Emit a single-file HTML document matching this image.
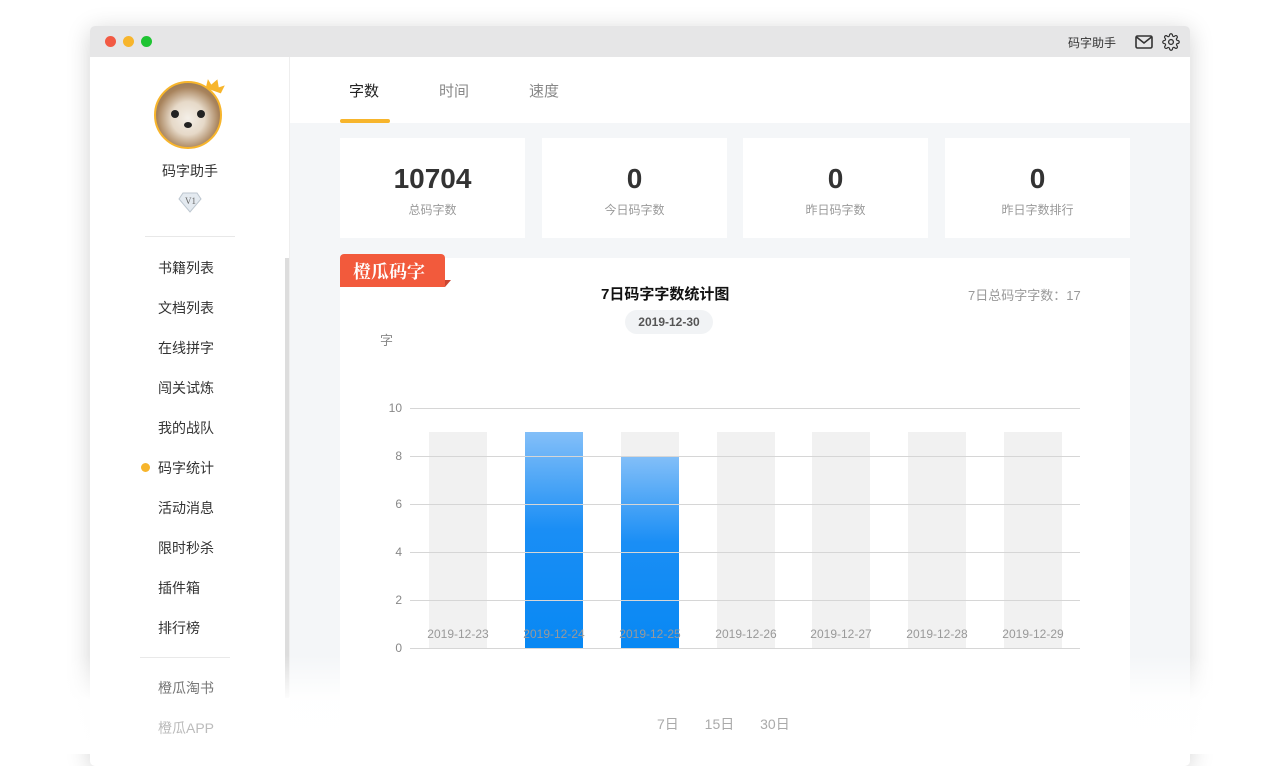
<!DOCTYPE html>
<html><head><meta charset="utf-8"><style>
*{margin:0;padding:0;box-sizing:border-box}
body{width:1280px;height:754px;background:#fff;position:relative;overflow:hidden;font-family:"Liberation Sans","Noto Sans CJK SC",sans-serif}
.a{position:absolute}
.win{left:90px;top:26px;width:1100px;height:740px;background:#fff;box-shadow:0 4px 24px rgba(0,0,0,.18);border-radius:5px;overflow:hidden}
.tb{left:0;top:0;width:1100px;height:31px;background:#e6e6e7}
.dot{width:11px;height:11px;border-radius:50%;top:10px}
.menu{left:158px;font-size:14px;color:#333}
.card{background:#fff;top:138px;width:185px;height:100px;text-align:center}
.card b{display:block;font-size:28px;color:#333;margin-top:25px;line-height:32px}
.card span{display:block;font-size:12px;color:#999;margin-top:6px}
.gl{left:410px;width:670px;height:1px;background:#d6d6d6}
.yl{width:20px;text-align:right;left:382px;font-size:12px;color:#888}
.gb{width:58px;background:#f1f1f1;top:432px;height:216px}
.xl{font-size:12px;color:#999;top:627px;width:90px;text-align:center}
</style></head><body>
<div class="a win">
 <div class="a tb"></div>
 <div class="a dot" style="left:15px;background:#f25a44"></div>
 <div class="a dot" style="left:33px;background:#f7b52c"></div>
 <div class="a dot" style="left:51px;background:#1fc433"></div>
 <div class="a" style="left:978px;top:8px;font-size:12px;color:#333">码字助手</div>
 <svg class="a" style="left:1045px;top:9px" width="18" height="14" viewBox="0 0 18 14"><rect x="1" y="1" width="16" height="12" rx="1.5" fill="none" stroke="#333" stroke-width="1.6"/><path d="M1.5 2L9 8l7.5-6" fill="none" stroke="#333" stroke-width="1.6"/></svg>
 <svg class="a" style="left:1072px;top:7px" width="18" height="18" viewBox="0 0 24 24"><circle cx="12" cy="12" r="3.2" fill="none" stroke="#333" stroke-width="1.8"/><path d="M19.4 15a1.7 1.7 0 0 0 .3 1.8l.1.1a2 2 0 1 1-2.8 2.8l-.1-.1a1.7 1.7 0 0 0-1.8-.3 1.7 1.7 0 0 0-1 1.5V21a2 2 0 1 1-4 0v-.1a1.7 1.7 0 0 0-1.1-1.5 1.7 1.7 0 0 0-1.8.3l-.1.1a2 2 0 1 1-2.8-2.8l.1-.1a1.7 1.7 0 0 0 .3-1.8 1.7 1.7 0 0 0-1.5-1H3a2 2 0 1 1 0-4h.1a1.7 1.7 0 0 0 1.5-1.1 1.7 1.7 0 0 0-.3-1.8l-.1-.1a2 2 0 1 1 2.8-2.8l.1.1a1.7 1.7 0 0 0 1.8.3H9a1.7 1.7 0 0 0 1-1.5V3a2 2 0 1 1 4 0v.1a1.7 1.7 0 0 0 1 1.5 1.7 1.7 0 0 0 1.8-.3l.1-.1a2 2 0 1 1 2.8 2.8l-.1.1a1.7 1.7 0 0 0-.3 1.8V9a1.7 1.7 0 0 0 1.5 1H21a2 2 0 1 1 0 4h-.1a1.7 1.7 0 0 0-1.5 1z" fill="none" stroke="#333" stroke-width="1.6"/></svg>
</div>
<!-- sidebar -->
<div class="a" style="left:289px;top:57px;width:1px;height:640px;background:#eee"></div>
<div class="a" style="left:285px;top:258px;width:4px;height:440px;background:#ddd"></div>
<div class="a" style="left:154px;top:81px;width:68px;height:68px;border-radius:50%;border:2px solid #f7b52c;background:radial-gradient(circle at 50% 55%,#f4efe8 0,#e6d9c8 35%,#a8835c 65%,#7b6a55 100%)"></div>
<div class="a" style="left:171px;top:110px;width:8px;height:8px;border-radius:50%;background:#222"></div>
<div class="a" style="left:197px;top:110px;width:8px;height:8px;border-radius:50%;background:#222"></div>
<div class="a" style="left:184px;top:122px;width:8px;height:6px;border-radius:50%;background:#222"></div>
<svg class="a" style="left:205px;top:78px" width="20" height="16" viewBox="0 0 20 16"><path d="M2 13L1 4l5 4 4-7 4 7 5-4-1 9z" fill="#f7b52c" transform="rotate(20 10 8)"/></svg>
<div class="a" style="left:162px;top:161px;font-size:14px;color:#333">码字助手</div>
<svg class="a" style="left:178px;top:191px" width="24" height="22" viewBox="0 0 24 22"><path d="M5 2h14l4 6-11 13L1 8z" fill="#e4eaf0" stroke="#bcc6cf"/><text x="7" y="13" font-size="9" fill="#666" font-family="Liberation Serif">V1</text></svg>
<div class="a" style="left:145px;top:236px;width:90px;height:1px;background:#e8e8e8"></div>
<div class="a menu" style="top:258px">书籍列表</div>
<div class="a menu" style="top:298px">文档列表</div>
<div class="a menu" style="top:338px">在线拼字</div>
<div class="a menu" style="top:378px">闯关试炼</div>
<div class="a menu" style="top:418px">我的战队</div>
<div class="a" style="left:141px;top:463px;width:9px;height:9px;border-radius:50%;background:#f7b52c"></div>
<div class="a menu" style="top:458px">码字统计</div>
<div class="a menu" style="top:498px">活动消息</div>
<div class="a menu" style="top:538px">限时秒杀</div>
<div class="a menu" style="top:578px">插件箱</div>
<div class="a menu" style="top:618px">排行榜</div>
<div class="a" style="left:140px;top:657px;width:90px;height:1px;background:#e8e8e8"></div>
<!-- main -->
<div class="a" style="left:290px;top:123px;width:900px;height:620px;background:#f4f6f8"></div>
<div class="a" style="left:349px;top:80px;font-size:15px;color:#222">字数</div>
<div class="a" style="left:439px;top:80px;font-size:15px;color:#888">时间</div>
<div class="a" style="left:529px;top:80px;font-size:15px;color:#888">速度</div>
<div class="a" style="left:340px;top:119px;width:50px;height:4px;border-radius:2px;background:#f7b52c"></div>
<div class="a card" style="left:340px"><b>10704</b><span>总码字数</span></div>
<div class="a card" style="left:542px"><b>0</b><span>今日码字数</span></div>
<div class="a card" style="left:743px"><b>0</b><span>昨日码字数</span></div>
<div class="a card" style="left:945px"><b>0</b><span>昨日字数排行</span></div>
<div class="a" style="left:340px;top:258px;width:790px;height:470px;background:#fff"></div>
<div class="a" style="left:340px;top:254px;width:105px;height:33px;background:#f25a3c;border-radius:4px 4px 0 0;color:#fff;font-family:'Noto Serif CJK SC',serif;font-size:18px;font-weight:bold;padding:4px 0 0 13px">橙瓜码字</div>
<div class="a" style="left:445px;top:280px;width:0;height:0;border-left:6px solid #c94530;border-bottom:7px solid transparent"></div>
<div class="a" style="left:601px;top:283px;font-size:15px;font-weight:bold;color:#111">7日码字字数统计图</div>
<div class="a" style="left:625px;top:310px;width:88px;height:24px;border-radius:12px;background:#f1f3f5;font-size:12px;color:#555;text-align:center;line-height:24px;font-weight:bold">2019-12-30</div>
<div class="a" style="left:968px;top:285px;font-size:13px;color:#999">7日总码字字数：17</div>
<div class="a" style="left:380px;top:330px;font-size:13px;color:#888">字</div>
<div class="a gb" style="left:429px"></div><div class="a gb" style="left:525px"></div><div class="a gb" style="left:621px"></div><div class="a gb" style="left:717px"></div><div class="a gb" style="left:812px"></div><div class="a gb" style="left:908px"></div><div class="a gb" style="left:1004px"></div>
<div class="a" style="left:525px;top:432px;width:58px;height:216px;background:linear-gradient(#83bff8,#1a8ef5 45%,#0888f3)"></div>
<div class="a" style="left:621px;top:456px;width:58px;height:192px;background:linear-gradient(#83bff8,#1a8ef5 45%,#0888f3)"></div>
<div class="a gl" style="top:408px"></div><div class="a gl" style="top:456px"></div><div class="a gl" style="top:504px"></div><div class="a gl" style="top:552px"></div><div class="a gl" style="top:600px"></div><div class="a gl" style="top:648px"></div>
<div class="a yl" style="top:401px">10</div><div class="a yl" style="top:449px">8</div><div class="a yl" style="top:497px">6</div><div class="a yl" style="top:545px">4</div><div class="a yl" style="top:593px">2</div><div class="a yl" style="top:641px">0</div>
<div class="a xl" style="left:413px">2019-12-23</div><div class="a xl" style="left:509px">2019-12-24</div><div class="a xl" style="left:605px">2019-12-25</div><div class="a xl" style="left:701px">2019-12-26</div><div class="a xl" style="left:796px">2019-12-27</div><div class="a xl" style="left:892px">2019-12-28</div><div class="a xl" style="left:988px">2019-12-29</div>
<div class="a" style="left:0;top:655px;width:1280px;height:99px;background:linear-gradient(rgba(255,255,255,0),rgba(255,255,255,.95) 45%,#fff)"></div>
<div class="a menu" style="top:678px;color:#777">橙瓜淘书</div>
<div class="a menu" style="top:718px;color:#bbb">橙瓜APP</div>
<div class="a" style="left:657px;top:714px;font-size:14px;color:#aaa;word-spacing:22px">7日 15日 30日</div>
</body></html>
